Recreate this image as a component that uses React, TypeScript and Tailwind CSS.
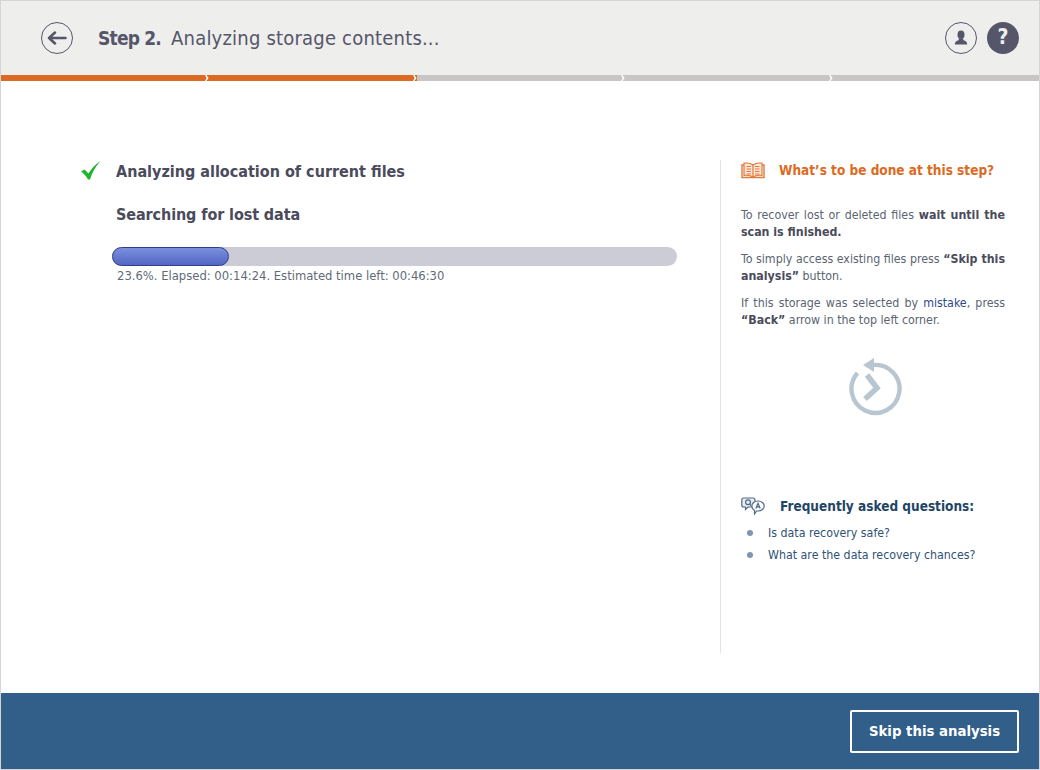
const FONT = "font-['DejaVu_Sans_Condensed','DejaVu_Sans',sans-serif]"

function BackIcon() {
    return (
        <div className="w-8 h-8 rounded-full border border-[#55566a] flex items-center justify-center">
            <svg width="20" height="14" viewBox="0 0 20 14" fill="none" stroke="#55566a" strokeWidth="2.5" strokeLinecap="round" strokeLinejoin="round">
                <path d="M18.5 7 H2 M8 1.5 L2 7 L8 12.5" />
            </svg>
        </div>
    )
}

function UserIcon() {
    return (
        <div className="w-8 h-8 rounded-full border border-[#55566a] flex items-center justify-center">
            <svg width="16" height="16" viewBox="0 0 14 14" fill="#55566a">
                <ellipse cx="7" cy="4.2" rx="3.1" ry="3.7" />
                <path d="M5.2 7.5 L8.8 7.5 L9.2 9 C11 9.6 12.2 10.2 12.5 12.6 L1.5 12.6 C1.8 10.2 3 9.6 4.8 9 Z" />
            </svg>
        </div>
    )
}

function StepBar() {
    const steps = [true, true, false, false, false]
    return (
        <div className="flex h-[6px] bg-white">
            {steps.map((done, i) => (
                <div key={i} className={`relative h-full ${i === 4 ? 'flex-1' : 'w-[208px]'} ${done ? 'bg-[#dd6a23]' : 'bg-[#c8c6c4]'}`}>
                    {i < 4 && (
                        <svg className="absolute right-0 top-0" width="4" height="6" viewBox="0 0 4 6">
                            <path d="M0 0 L1.4 0 L3.6 3 L1.4 6 L0 6 L1.6 3 Z" fill="#fff" />
                        </svg>
                    )}
                </div>
            ))}
        </div>
    )
}

function BookIcon() {
    return (
        <svg width="24" height="17" viewBox="0 0 24 17" fill="none" stroke="#e07b3c" strokeWidth="1.2">
            <path d="M12 3 C9.5 1 6 .8 3 1.2 L3 13.5 C6 13 9.5 13.4 12 15 C14.5 13.4 18 13 21 13.5 L21 1.2 C18 .8 14.5 1 12 3 Z" fill="#fbe6d8" />
            <path d="M12 3 L12 15" />
            <path d="M3 3 L1 3 L1 15.5 L23 15.5 L23 3 L21 3" strokeWidth="1.4" />
            <path d="M5.5 4.5 H10 M5.5 7 H10 M5.5 9.5 H10 M5.5 12 H10 M14 4.5 H18.5 M14 7 H18.5 M14 9.5 H18.5 M14 12 H18.5" />
        </svg>
    )
}

function FaqIcon() {
    return (
        <svg width="24" height="18" viewBox="0 0 24 18" fill="none" stroke="#4f6a86" strokeWidth="1.2">
            <path d="M2.5 1 H12 C13.2 1 14 1.8 14 3 V8 C14 9.2 13.2 10 12 10 H7 L4.5 12.5 V10 H2.5 C1.3 10 .8 9.2 .8 8 V3 C.8 1.8 1.3 1 2.5 1 Z" fill="#e8edf2" />
            <circle cx="7" cy="5.3" r="2.4" />
            <path d="M8.4 7 L10 8.6" />
            <path d="M17 4 C20.5 4 23.2 6.3 23.2 9 C23.2 11.7 20.5 14 17 14 L15.5 14 L13.5 17 L13.5 13.4 C11.8 12.4 10.8 10.8 10.8 9 C10.8 6.3 13.5 4 17 4 Z" fill="#fff" />
            <path d="M14.8 11.5 L17 6.3 L19.2 11.5 M15.7 9.8 H18.3" />
        </svg>
    )
}

function ClockIcon() {
    return (
        <svg width="54" height="60" viewBox="0 0 54 60" fill="none" stroke="#b7c6d1" strokeWidth="4.4">
            <path d="M24 7 A24 24 0 1 1 8.5 15" />
            <path d="M25 0 L14 7 L25 14 Z" fill="#b7c6d1" stroke="none" />
            <path d="M18 17 L28 30 L16 41" strokeWidth="5.5" />
        </svg>
    )
}

export default function App() {
    return (
        <div className={`w-[1040px] h-[770px] bg-white border border-[#d4d4d4] flex flex-col ${FONT}`}>
            <header className="h-[74px] bg-[#eeeeec] flex items-center pl-[40px] pr-[20px]">
                <BackIcon />
                <div className="ml-[25px] text-[#55566a] flex items-baseline">
                    <span className="font-bold text-[19px] tracking-[-0.8px]">Step 2.</span>
                    <span className="ml-[10px] text-[20px] tracking-[0.2px]">Analyzing storage contents...</span>
                </div>
                <div className="ml-auto flex gap-[10px]">
                    <UserIcon />
                    <div className="w-8 h-8 rounded-full bg-[#55566a] flex items-center justify-center text-[#eeeeec] text-[21px] font-bold">?</div>
                </div>
            </header>
            <StepBar />

            <main className="flex-1 flex pt-[79px] pb-[40px]">
                <section className="w-[719px] pl-[79px]">
                    <div className="flex items-center h-[22px]">
                        <svg className="mb-[2px] ml-[1px]" width="20" height="19" viewBox="0 0 20 19">
                            <path d="M0 10.5 L3.5 8.5 L7.5 12.5 C10.5 7.5 14 3.5 19.5 0 C14.5 5.5 11 11.5 9 18.5 L7 18.5 C5.5 15.5 3 12.5 0 10.5 Z" fill="#1fb42c" />
                        </svg>
                        <h2 className="ml-[15px] mt-[2px] text-[16px] font-bold text-[#4a4b5c]">Analyzing allocation of current files</h2>
                    </div>
                    <h2 className="ml-[36px] mt-[22px] h-[22px] leading-[22px] text-[16px] tracking-[-0.1px] font-bold text-[#4a4b5c]">Searching for lost data</h2>
                    <div className="ml-[32px] mt-[21px] w-[565px] h-[19px] rounded-full bg-[#cbccd6]">
                        <div className="w-[117px] h-full rounded-full border border-[#2d3f8c] bg-gradient-to-b from-[#7c8fdf] to-[#5266c4]" />
                    </div>
                    <p className="ml-[37px] mt-[1px] text-[12.9px] leading-[17px] text-[#5f6b78]">23.6%. Elapsed: 00:14:24. Estimated time left: 00:46:30</p>
                </section>

                <aside className="w-[285px] border-l border-[#e4e4e4] pl-[20px]">
                    <div className="flex items-center h-[20px]">
                        <BookIcon />
                        <h3 className="ml-[14px] mt-[1px] text-[13.5px] font-bold text-[#dc6a23]">What’s to be done at this step?</h3>
                    </div>
                    <div className="mt-[27px] text-[12.3px] leading-[17px] text-[#5a6472] text-justify flex flex-col gap-[10px]">
                        <p>To recover lost or deleted files <b className="text-[#4a4b5c]">wait until the scan is finished.</b></p>
                        <p>To simply access existing files press <b className="text-[#4a4b5c]">“Skip this analysis”</b> button.</p>
                        <p>If this storage was selected by <span className="text-[#2f4a8a]">mistake</span>, press <b className="text-[#4a4b5c]">“Back”</b> arrow in the top left corner.</p>
                    </div>
                    <div className="mt-[29px] ml-[108px]">
                        <ClockIcon />
                    </div>
                    <div className="mt-[78px] flex items-center h-[20px]">
                        <FaqIcon />
                        <h3 className="ml-[15px] mt-[1px] text-[13.5px] font-bold text-[#1f4566]">Frequently asked questions:</h3>
                    </div>
                    <ul className="mt-[6px] text-[12.3px] leading-[22px] text-[#2f5276]">
                        <li className="flex items-center"><span className="w-[6px] h-[6px] ml-[6px] mr-[15px] rounded-full bg-[#7d95b0]" />Is data recovery safe?</li>
                        <li className="flex items-center"><span className="w-[6px] h-[6px] ml-[6px] mr-[15px] rounded-full bg-[#7d95b0]" />What are the data recovery chances?</li>
                    </ul>
                </aside>
            </main>

            <footer className="h-[76px] bg-[#315f89] flex items-center justify-end pr-[20px]">
                <button className="w-[169px] h-[43px] border-2 border-white rounded-[2px] text-white text-[14.8px] font-bold">Skip this analysis</button>
            </footer>
        </div>
    )
}
